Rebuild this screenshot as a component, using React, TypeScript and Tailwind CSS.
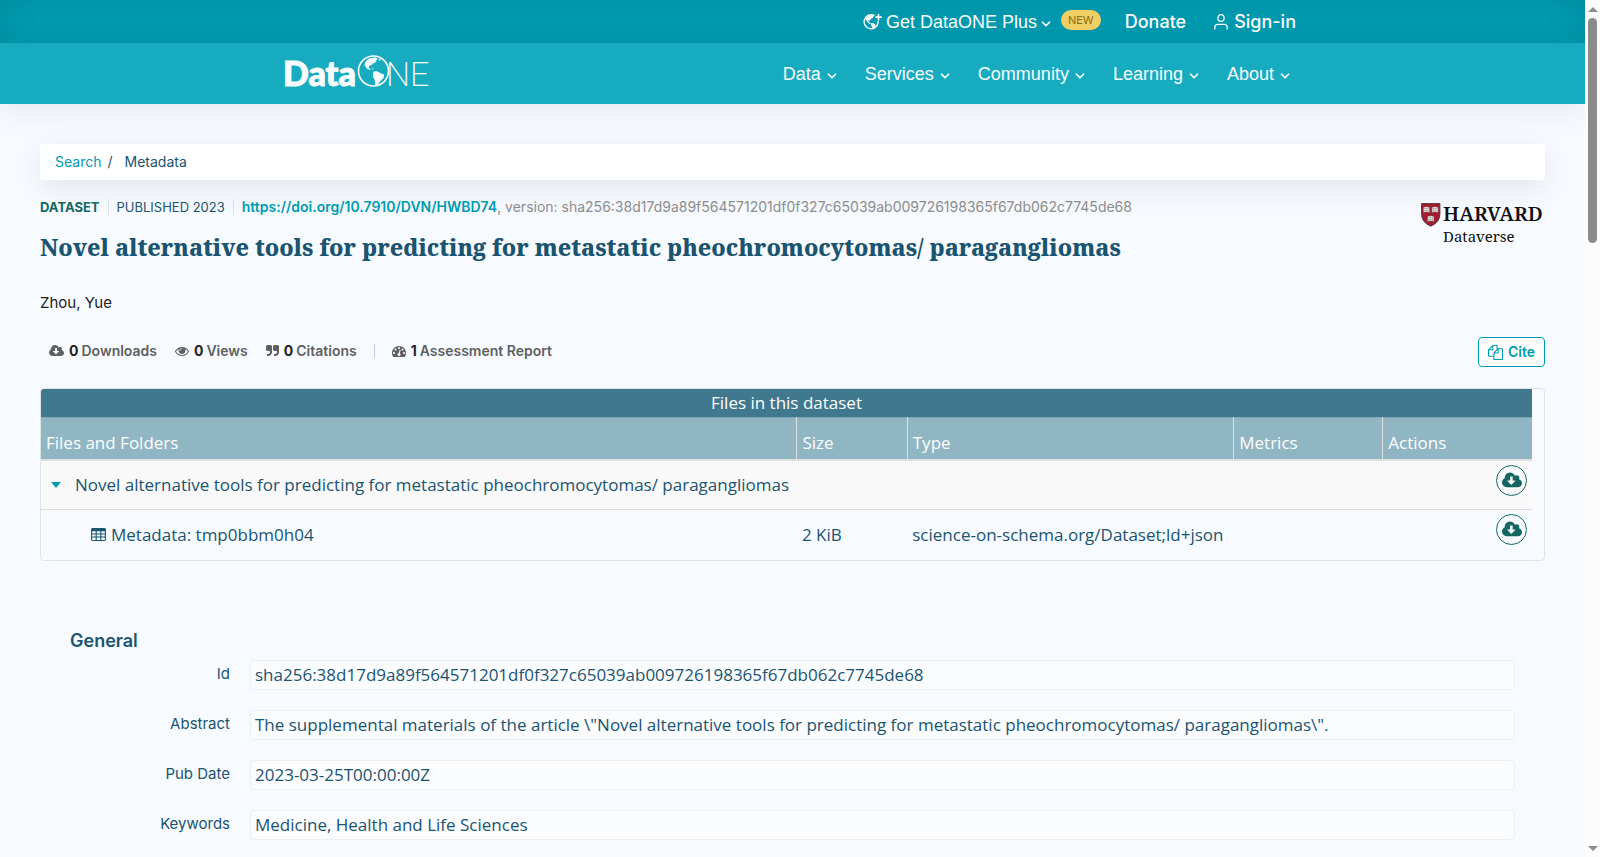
import React from "react";
import { ChevronDown } from "lucide-react";

type IconProps = { className?: string };

const CloudDownloadIcon = ({ className }: IconProps) => (
  <svg viewBox="0 0 1920 1792" fill="currentColor" aria-hidden="true" className={className}>
    <path d="M1280 928q0-14-9-23t-23-9h-224v-352q0-13-9.5-22.5t-22.5-9.5h-192q-13 0-22.5 9.5t-9.5 22.5v352h-224q-13 0-22.5 9.5t-9.5 22.5q0 14 9 23l352 352q9 9 23 9t23-9l351-351q10-12 10-24zm640 224q0 159-112.5 271.5t-271.5 112.5h-1088q-185 0-316.500-131.500t-131.500-316.500q0-130 70-240t188-165q-2-30-2-43 0-212 150-362t362-150q156 0 285.500 87t188.500 231q71-62 166-62 106 0 181 75t75 181q0 76-41 138 130 31 213.500 135.500t83.500 238.500z" />
  </svg>
);

const EyeIcon = ({ className }: IconProps) => (
  <svg viewBox="0 0 1792 1792" fill="currentColor" aria-hidden="true" className={className}>
    <path d="M1664 960q-152-236-381-353 61 104 61 225 0 185-131.500 316.500t-316.500 131.500-316.500-131.500-131.500-316.500q0-121 61-225-229 117-381 353 133 205 333.500 326.500t434.500 121.500 434.500-121.500 333.500-326.500zm-720-384q0-20-14-34t-34-14q-125 0-214.500 89.500t-89.500 214.500q0 20 14 34t34 14 34-14 14-34q0-86 61-147t147-61q20 0 34-14t14-34zm848 384q0 34-20 69-140 230-376.500 368.500t-499.500 138.500-499.500-139-376.500-368q-20-35-20-69t20-69q140-229 376.500-368t499.500-139 499.500 139 376.500 368q20 35 20 69z" />
  </svg>
);

const QuoteIcon = ({ className }: IconProps) => (
  <svg viewBox="0 0 1664 1792" fill="currentColor" aria-hidden="true" className={className}>
    <path d="M768 320v704q0 104-40.500 198.500t-109.500 163.500-163.500 109.500-198.500 40.500h-64q-26 0-45-19t-19-45v-128q0-26 19-45t45-19h64q106 0 181-75t75-181v-32q0-40-28-68t-68-28h-224q-80 0-136-56t-56-136v-384q0-80 56-136t136-56h384q80 0 136 56t56 136zm896 0v704q0 104-40.500 198.500t-109.500 163.500-163.500 109.500-198.500 40.500h-64q-26 0-45-19t-19-45v-128q0-26 19-45t45-19h64q106 0 181-75t75-181v-32q0-40-28-68t-68-28h-224q-80 0-136-56t-56-136v-384q0-80 56-136t136-56h384q80 0 136 56t56 136z" />
  </svg>
);

const DashboardIcon = ({ className }: IconProps) => (
  <svg viewBox="0 0 1792 1792" fill="currentColor" aria-hidden="true" className={className}>
    <path d="M384 1152q0-53-37.500-90.500t-90.500-37.500-90.500 37.500-37.500 90.500 37.500 90.500 90.500 37.500 90.500-37.500 37.500-90.500zm192-448q0-53-37.500-90.500t-90.500-37.500-90.500 37.500-37.500 90.500 37.500 90.500 90.500 37.500 90.500-37.500 37.500-90.500zm428 481l101-382q6-26-7.500-48.500t-38.500-29.500-48 6.500-30 39.500l-101 382q-60 5-107 43.500t-63 98.500q-20 77 20 146t117 89 146-20 89-117q16-60-6-117t-72-91zm660-33q0-53-37.500-90.500t-90.500-37.500-90.500 37.500-37.500 90.500 37.500 90.500 90.500 37.500 90.500-37.500 37.500-90.500zm-640-640q0-53-37.500-90.500t-90.500-37.500-90.500 37.500-37.500 90.500 37.500 90.500 90.500 37.500 90.500-37.500 37.500-90.500zm448 192q0-53-37.500-90.500t-90.500-37.500-90.500 37.500-37.500 90.500 37.500 90.500 90.500 37.500 90.500-37.500 37.500-90.500zm320 448q0 261-141 483-19 29-54 29h-1402q-35 0-54-29-141-221-141-483 0-182 71-348t191-286 286-191 348-71 348 71 286 191 191 286 71 348z" />
  </svg>
);

const CopyIcon = ({ className }: IconProps) => (
  <svg viewBox="0 0 1792 1792" fill="currentColor" aria-hidden="true" className={className}>
    <path d="M1696 384q40 0 68 28t28 68v1216q0 40-28 68t-68 28h-960q-40 0-68-28t-28-68v-288h-544q-40 0-68-28t-28-68v-672q0-40 20-88t48-76l408-408q28-28 76-48t88-20h416q40 0 68 28t28 68v328q68-40 128-40h416zm-544 213l-299 299h299v-299zm-640-384l-299 299h299v-299zm196 647l316-316v-416h-384v416q0 40-28 68t-68 28h-416v640h512v-256q0-40 20-88t48-76zm956 804v-1152h-384v416q0 40-28 68t-68 28h-416v640h896z" />
  </svg>
);

const TableIcon = ({ className }: IconProps) => (
  <svg viewBox="0 0 16 14" fill="currentColor" fillRule="evenodd" aria-hidden="true" className={className}>
    <path d="M1.500 0h13q1.500 0 1.500 1.500v11q0 1.500-1.500 1.500h-13q-1.500 0-1.500-1.500v-11q0-1.500 1.500-1.500zM1.200 3.500v2.300h3.700v-2.300zM6.100 3.500v2.300h3.800v-2.300zM11.100 3.500v2.300h3.700v-2.300zM1.200 6.900v2.300h3.700v-2.300zM6.100 6.900v2.300h3.800v-2.300zM11.100 6.900v2.300h3.700v-2.300zM1.200 10.300v2.500h3.700v-2.500zM6.100 10.300v2.500h3.800v-2.500zM11.100 10.300v2.500h3.700v-2.500z" />
  </svg>
);

const GlobePlusIcon = ({ className }: IconProps) => (
  <svg viewBox="0 0 19 18" aria-hidden="true" className={className}>
    <path d="M11.500 2.600a7 7 0 1 0 3.600 5.400" fill="none" stroke="currentColor" strokeWidth="1.400" />
    <path d="M2.500 6.200C3.600 3.600 5.800 2.300 8.600 2.300l2 .8-.6 2-1.900.5-.9 1.800-1.800.2.400 1.500 1.900.9-.5 1.300-2-1.200z" fill="currentColor" />
    <path d="M8.300 9.800l2.300.4 2.100 1.600-.8 2.300-2 2.100-1.100-2.600-1-1.700z" fill="currentColor" />
    <path d="M15.500 1v6.400M12.300 4.200h6.400" stroke="currentColor" strokeWidth="1.700" fill="none" />
  </svg>
);

const UserIcon = ({ className }: IconProps) => (
  <svg viewBox="0 0 14 16" fill="none" stroke="currentColor" strokeWidth="1.300" aria-hidden="true" className={className}>
    <ellipse cx="7" cy="4" rx="3.100" ry="3.300" />
    <path d="M.8 15.500v-2.200q0-3 3.200-3h6q3.200 0 3.200 3v2.200" />
  </svg>
);

const DataOneLogo = () => (
  <svg viewBox="-4 -8 156 52" role="img" aria-label="DataONE" fill="#f8fcff" className="h-[52px] w-[156px]">
    <text x="-2" y="32" stroke="#f8fcff" strokeWidth="1" className="font-['Lato',sans-serif] text-[34px] font-black">Data</text>
    <circle cx="88.500" cy="17" r="15" fill="none" stroke="#f8fcff" strokeWidth="1.600" />
    <path d="M80.200 8.500q2-4 6.800-4.800l3.800-.2 2 1.800-2.200 1.500 1 1.200-3 1-1.700 2-2.600.8-.8 1.700 2.200 1.800-.8.800-3-1.700-2.400-3.200z" />
    <path d="M93.500 4.600l2.500 1-1.300 1.700zM86.200 14.200l2.800.6-1 .8zM88.500 17.600l3.600-.4 4 2.200 3.200 1.200-.8 3.300-2.900 2.900-2.900 4-2.300 1.300-.6-6-2-3.600z" />
    <text x="101" y="32" className="font-['Roboto',sans-serif] text-[34px] font-extralight">NE</text>
  </svg>
);

const HarvardLogo = () => (
  <svg viewBox="0 -6 128 56" role="img" aria-label="Harvard Dataverse" className="h-14 w-32 shrink-0">
    <path d="M4.600.600h18.300v10.400q0 8.400-9.200 12.200q-9.100-3.800-9.100-12.200z" fill="#a51c30" stroke="#4d3a3f" strokeWidth="1" />
    <g fill="#f3ece9" stroke="#4d3a3f" strokeWidth=".5">
      <path d="M6.300 4.200l3.200-.5 3.200.5v5.200l-3.200-.4-3.200.4zM14.800 4.200l3.200-.5 3.200.5v5.200l-3.200-.4-3.200.4zM10.400 13.200l3.300-.5 3.300.5v5.200l-3.300-.4-3.300.4z" />
    </g>
    <path d="M7.300 5.600h4.400M7.300 7.400h4.400M15.800 5.600h4.400M15.800 7.400h4.400M11.400 14.700h4.600M11.400 16.500h4.600" stroke="#6b5a5e" strokeWidth=".7" strokeDasharray="1.300 .5" />
    <g fill="#111">
      <text x="26" y="18" className="font-['Noto_Serif',serif] text-[20px] font-semibold">HARVARD</text>
      <text x="26" y="39" className="font-['Noto_Serif',serif] text-[15px]">Dataverse</text>
    </g>
  </svg>
);

const menus = ["Data", "Services", "Community", "Learning", "About"];

const fields = [
  ["Id", "sha256:38d17d9a89f564571201df0f327c65039ab009726198365f67db062c7745de68"],
  ["Abstract", 'The supplemental materials of the article \\"Novel alternative tools for predicting for metastatic pheochromocytomas/ paragangliomas\\".'],
  ["Pub Date", "2023-03-25T00:00:00Z"],
  ["Keywords", "Medicine, Health and Life Sciences"],
];

const title = "Novel alternative tools for predicting for metastatic pheochromocytomas/ paragangliomas";

const MenuArrow = () => <ChevronDown aria-hidden="true" className="-mx-0.5 mt-1 size-3.5" strokeWidth={3} />;

function Header() {
  return (
    <header className="text-[#f8fcff] shadow-[0_8px_30px_rgba(0,0,0,0.07)]">
      <div className="h-[43px] bg-[#009bb0] shadow-[inset_0_0_30px_rgba(0,70,80,0.18)]">
        <div className="mx-auto flex h-full max-w-[1015px] items-center justify-end">
          <button className="flex items-center gap-1 font-['Liberation_Sans',sans-serif] text-lg leading-6">
            <GlobePlusIcon className="h-[18px] w-[19px]" />
            <span>Get DataONE Plus</span>
            <MenuArrow />
          </button>
          <span className="mb-1 ml-2.5 h-5 rounded-full bg-[#f0cf65] px-[7px] text-[11px] leading-5 text-[#8a6d14]">NEW</span>
          <a href="#donate" className="ml-6 text-lg leading-6 font-medium">Donate</a>
          <a href="#signin" className="mr-1 ml-7 flex items-center gap-1.5 text-lg leading-6 font-medium">
            <UserIcon className="h-4 w-3.5" />
            Sign-in
          </a>
        </div>
      </div>
      <div className="h-[61px] bg-[#17abc0]">
        <div className="mx-auto flex h-full max-w-[1015px] items-center justify-between">
          <a href="#home" className="-mt-1 -ml-1"><DataOneLogo /></a>
          <nav className="mr-2.5 flex gap-7 font-['Liberation_Sans',sans-serif] text-lg leading-6">
            {menus.map((m) => (
              <button key={m} className="flex items-center gap-1.5">
                {m}
                <MenuArrow />
              </button>
            ))}
          </nav>
        </div>
      </div>
    </header>
  );
}

function Stat({ icon, count, label }: { icon: React.ReactNode; count: string; label: string }) {
  return (
    <button className="flex items-center text-[#5f5f5f]">
      {icon}
      <strong className="ml-[5px] font-bold text-[#222]">{count}</strong>
      <span className="ml-[3px]">{label}</span>
    </button>
  );
}

const DownloadButton = () => (
  <button aria-label="Download" className="ml-auto grid size-[31px] place-items-center rounded-full border border-[#17685f] text-[#146660]">
    <CloudDownloadIcon className="h-[19px] w-5" />
  </button>
);

function FilesTable() {
  return (
    <div className="mt-[21px] overflow-hidden rounded border border-[#e0e2e4] pr-3">
      <table className="w-full table-fixed border-collapse text-left font-['Open_Sans',sans-serif] text-[17px] leading-6 text-[#1a5470]">
        <caption className="h-7 bg-[#40788e] text-center leading-7 text-white">Files in this dataset</caption>
        <colgroup>
          <col className="w-[50.7%]" />
          <col className="w-[7.4%]" />
          <col className="w-[21.9%]" />
          <col className="w-[10%]" />
          <col />
        </colgroup>
        <thead>
          <tr className="h-[42px] border-t border-b-2 border-t-[#80a5b3] border-b-[#dde0e1] bg-[#90b5c3] text-white">
            <th className="px-[5px] pt-2.5 font-normal">Files and Folders</th>
            <th className="border-l border-[#ddd] px-[5px] pt-2.5 font-normal">Size</th>
            <th className="border-l border-[#ddd] px-[5px] pt-2.5 font-normal">Type</th>
            <th className="border-l border-[#ddd] px-[5px] pt-2.5 font-normal">Metrics</th>
            <th className="border-l border-[#ddd] px-[5px] pt-2.5 font-normal">Actions</th>
          </tr>
        </thead>
        <tbody>
          <tr className="h-[50px] border-b border-[#ddd] bg-[#f9f9f9]">
            <td colSpan={4} className="px-2.5">
              <div className="flex items-center">
                <svg viewBox="0 0 10 6" className="h-1.5 w-2.5" fill="#009bb0" aria-hidden="true"><path d="M0 0h10l-5 6z" /></svg>
                <a href="#package" className="ml-3.5">{title}</a>
              </div>
            </td>
            <td className="px-[5px] pt-1 align-top"><DownloadButton /></td>
          </tr>
          <tr className="h-[50px]">
            <td className="px-[5px]">
              <a href="#metadata" className="ml-[45px] flex items-center gap-[5px]">
                <TableIcon className="h-[13px] w-[15px]" />
                Metadata: tmp0bbm0h04
              </a>
            </td>
            <td className="px-[5px]">2 KiB</td>
            <td className="px-[5px] whitespace-nowrap">science-on-schema.org/Dataset;ld+json</td>
            <td />
            <td className="px-[5px] pt-1 align-top"><DownloadButton /></td>
          </tr>
        </tbody>
      </table>
    </div>
  );
}

export default function App() {
  return (
    <div className="flex min-h-screen bg-[#f7fbff] font-['Inter',sans-serif]">
      <div className="min-w-0 flex-1">
        <Header />
        <main className="px-10 pt-10 pb-4">
          <nav aria-label="Breadcrumb" className="flex h-9 items-center rounded-sm bg-white px-[15px] text-sm text-[#1a5470] shadow-[0_8px_30px_rgba(0,0,0,0.09)]">
            <a href="#search" className="text-[#009bb0]">Search</a>
            <span className="mr-3 ml-1.5">/</span>
            <span>Metadata</span>
          </nav>

          <div className="mt-[17px] flex items-start justify-between">
            <div>
              <div className="flex h-5 items-center text-sm text-[#1a5470]">
                <strong className="border-r border-[#dcdfe2] pr-2 text-[13px] leading-4 font-bold text-[#146660]">DATASET</strong>
                <span className="border-r border-[#dcdfe2] px-2 text-[13px] leading-4">PUBLISHED 2023</span>
                <span className="ml-2 text-[#8c8c8c]">
                  <a href="#doi" className="font-semibold text-[#009bb0]">https://doi.org/10.7910/DVN/HWBD74</a>, version: sha256:38d17d9a89f564571201df0f327c65039ab009726198365f67db062c7745de68
                </span>
              </div>
              <h1 className="mt-3.5 font-['Noto_Serif',serif] text-[23px] leading-8 font-extrabold text-[#1a5470]">{title}</h1>
              <p className="mt-7 text-[15px] leading-6 text-[#222]">Zhou, Yue</p>
            </div>
            <HarvardLogo />
          </div>

          <div className="mt-[22px] flex h-[30px] items-center justify-between text-sm font-semibold">
            <div className="flex h-7 items-center self-start pl-[9px]">
              <Stat icon={<CloudDownloadIcon className="h-[14px] w-[15px]" />} count="0" label="Downloads" />
              <span className="w-[18px]" />
              <Stat icon={<EyeIcon className="size-3.5" />} count="0" label="Views" />
              <span className="w-[18px]" />
              <Stat icon={<QuoteIcon className="h-[14px] w-[13px]" />} count="0" label="Citations" />
              <span className="mx-[17px] h-3.5 w-px bg-[#c8cbce]" />
              <Stat icon={<DashboardIcon className="size-3.5" />} count="1" label="Assessment Report" />
            </div>
            <button className="flex h-[30px] items-center gap-[5px] rounded border border-[#009bb0] bg-white px-[9px] text-[#009bb0]">
              <CopyIcon className="size-[15px]" />
              Cite
            </button>
          </div>

          <FilesTable />

          <section className="mt-[66px] px-[30px] text-[#1a5470]">
            <h2 className="text-lg leading-7 font-semibold">General</h2>
            <dl className="mt-[5px] flex flex-col gap-5">
              {fields.map(([k, v]) => (
                <div key={k} className="flex gap-5">
                  <dt className="w-40 shrink-0 text-right text-[15px] leading-7">{k}</dt>
                  <dd className="h-[30px] flex-1 rounded-sm border border-[#eeeeef] bg-[#fbfcfe] px-1 font-['Open_Sans',sans-serif] text-[17px] leading-7">{v}</dd>
                </div>
              ))}
            </dl>
          </section>
        </main>
      </div>

      <div aria-hidden="true" className="flex w-[15px] shrink-0 flex-col items-center justify-between bg-[#fcfcfc] pb-1.5 text-[#8b8b8b]">
        <div className="flex flex-col items-center pt-[7px]">
          <svg viewBox="0 0 10 5" className="h-[5px] w-2.5" fill="currentColor"><path d="M5 0l5 5H0z" /></svg>
          <div className="mt-1.5 h-[225px] w-[9px] rounded-full bg-[#8b8b8b]" />
        </div>
        <svg viewBox="0 0 10 5" className="h-[5px] w-2.5" fill="currentColor"><path d="M0 0h10L5 5z" /></svg>
      </div>
    </div>
  );
}
